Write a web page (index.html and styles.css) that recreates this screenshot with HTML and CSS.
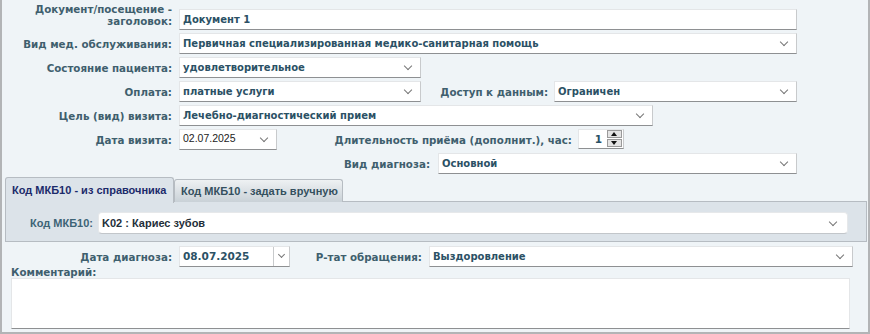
FILE: index.html
```html
<!DOCTYPE html>
<html lang="ru">
<head>
    <meta charset="UTF-8">
    <title>Посещение</title>
    <link rel="stylesheet" href="styles.css">
</head>
<body>
    <div class="form">
        <div class="row row-title">
            <div class="label">Документ/посещение -<br>заголовок:</div>
            <div class="field w-wide">Документ 1</div>
        </div>

        <div class="row">
            <div class="label">Вид мед. обслуживания:</div>
            <div class="field select w-wide">Первичная специализированная медико-санитарная помощь</div>
        </div>

        <div class="row">
            <div class="label">Состояние пациента:</div>
            <div class="field select w-mid">удовлетворительное</div>
        </div>

        <div class="row">
            <div class="label">Оплата:</div>
            <div class="field select w-mid">платные услуги</div>
            <div class="label label-access">Доступ к данным:</div>
            <div class="field select w-access">Ограничен</div>
        </div>

        <div class="row">
            <div class="label">Цель (вид) визита:</div>
            <div class="field select w-goal">Лечебно-диагностический прием</div>
        </div>

        <div class="row row-visit">
            <div class="label">Дата визита:</div>
            <div class="field select date w-date">02.07.2025</div>
            <div class="label label-duration">Длительность приёма (дополнит.), час:</div>
            <div class="spinner">
                <span class="spinner-value">1</span>
                <span class="spinner-buttons">
                    <span class="spin-btn up"></span>
                    <span class="spin-btn down"></span>
                </span>
            </div>
        </div>

        <div class="row">
            <div class="label label-diag">Вид диагноза:</div>
            <div class="field select w-diag">Основной</div>
        </div>

        <div class="tabs">
            <div class="tab active">Код МКБ10 - из справочника</div>
            <div class="tab">Код МКБ10 - задать вручную</div>
        </div>
        <div class="tab-panel">
            <div class="panel-label">Код МКБ10:</div>
            <div class="field select mkb">K02 : Кариес зубов</div>
        </div>

        <div class="row row-result">
            <div class="label">Дата диагноза:</div>
            <div class="field date-picker">
                <span class="date-value">08.07.2025</span>
                <span class="date-btn"></span>
            </div>
            <div class="label label-result">Р-тат обращения:</div>
            <div class="field select w-result">Выздоровление</div>
        </div>

        <div class="comment-label">Комментарий:</div>
        <div class="comment"></div>
    </div>
</body>
</html>
```

FILE: styles.css
```css
* {
    margin: 0;
    padding: 0;
    box-sizing: border-box;
}

body {
    font-family: 'DejaVu Sans', Verdana, sans-serif;
    background: #ffffff;
}

.form {
    width: 870px;
    height: 334px;
    background: #eff4f7;
    border: 2px solid #b2b4b6;
    border-top: none;
    padding-top: 9px;
}

.row {
    display: flex;
    align-items: center;
    height: 21px;
    margin-bottom: 3px;
}

.row-visit {
    margin-top: 1px;
}

.label {
    width: 170px;
    margin-right: 7px;
    text-align: right;
    font-size: 10.3px;
    font-weight: bold;
    color: #3f5f6e;
    line-height: 12px;
    white-space: nowrap;
}

.row-title .label {
    margin-bottom: 10px;
}

.field {
    position: relative;
    height: 21px;
    background: #fff;
    border: 1px solid #e4e6e8;
    border-bottom-color: #8e9092;
    border-right-color: #c8cacc;
    padding: 0 0 0 3px;
    font-size: 10px;
    font-weight: bold;
    color: #2b5165;
    line-height: 19px;
    white-space: nowrap;
}

.select::after {
    content: '';
    position: absolute;
    right: 9px;
    top: 5px;
    width: 5px;
    height: 5px;
    border-right: 1px solid #777;
    border-bottom: 1px solid #777;
    transform: rotate(45deg);
}

.w-wide { width: 618px; }
.w-mid { width: 242px; }
.w-access { width: 243px; }
.w-goal { width: 474px; }
.w-diag { width: 359px; }
.w-result { width: 424px; }

.label-access {
    width: 127px;
    margin-right: 6px;
}

.date {
    width: 98px;
    font-family: 'Liberation Sans', Arial, sans-serif;
    font-weight: normal;
    font-size: 10.5px;
    color: #222;
    line-height: 17px;
}

.label-duration {
    width: 295px;
    margin-right: 6px;
}

.spinner {
    display: flex;
    align-items: center;
    justify-content: flex-end;
    width: 46px;
    height: 20px;
    margin-top: -2px;
    background: #fff;
    border: 1px solid #e4e6e8;
    border-bottom-color: #8e9092;
    border-right-color: #c8cacc;
    padding-right: 1px;
}

.spinner-value {
    font-size: 10.5px;
    font-weight: bold;
    color: #2b5165;
    margin-right: 5px;
}

.spinner-buttons {
    display: flex;
    flex-direction: column;
    gap: 1px;
}

.spin-btn {
    position: relative;
    width: 15px;
    height: 8px;
    background: #e4e4e4;
    border: 1px solid #9a9a9a;
}

.spin-btn::after {
    content: '';
    position: absolute;
    left: 3px;
    border-left: 3.5px solid transparent;
    border-right: 3.5px solid transparent;
}

.spin-btn.up::after {
    top: 1px;
    border-bottom: 4px solid #111;
}

.spin-btn.down::after {
    top: 1px;
    border-top: 4px solid #111;
}

.label-diag {
    width: 428px;
    margin-right: 8px;
}

.tabs {
    display: flex;
    margin: 2px 0 0 3px;
    height: 25px;
    position: relative;
    z-index: 1;
}

.tab {
    width: 169px;
    height: 23px;
    margin-top: 2px;
    padding-left: 6px;
    font-family: 'Liberation Sans', Arial, sans-serif;
    font-size: 11px;
    font-weight: bold;
    line-height: 22px;
    color: #34505e;
    border: 1px solid #b6bcc2;
    border-bottom: none;
    border-radius: 3px 3px 0 0;
    background: linear-gradient(#eef1f3, #c9d1d7);
    white-space: nowrap;
}

.tab.active {
    margin-top: 0;
    height: 26px;
    line-height: 24px;
    color: #1c2b6b;
    background: #dce3e9;
}

.tab-panel {
    display: flex;
    align-items: center;
    margin: -1px 0 0 3px;
    width: 862px;
    height: 41px;
    background: #dce3e9;
    border: 1px solid #b6bcc2;
    padding-top: 2px;
}

.panel-label {
    width: 87px;
    text-align: right;
    margin-right: 5px;
    font-family: 'Liberation Sans', Arial, sans-serif;
    font-size: 11px;
    font-weight: bold;
    color: #3d6476;
}

.mkb {
    width: 750px;
    height: 22px;
    border-radius: 4px;
    border-color: #e6e8ea;
    border-bottom-color: #c2c6ca;
    font-family: 'Liberation Sans', Arial, sans-serif;
    font-size: 11px;
    color: #1f2f3a;
    line-height: 20px;
}

.mkb::after {
    top: 6px;
    right: 11px;
}

.row-result {
    margin-top: 4px;
    margin-bottom: 0;
}

.date-picker {
    display: flex;
    width: 111px;
    padding: 0;
}

.date-value {
    flex: 1;
    padding-left: 3px;
    font-size: 10.5px;
}

.date-btn {
    position: relative;
    width: 16px;
    border-left: 1px solid #c8cacc;
}

.date-btn::after {
    content: '';
    position: absolute;
    left: 5px;
    top: 5px;
    width: 4px;
    height: 4px;
    border-right: 1px solid #777;
    border-bottom: 1px solid #777;
    transform: rotate(45deg);
}

.label-result {
    width: 132px;
    margin-right: 7px;
}

.comment-label {
    margin: -1px 0 0 9px;
    font-size: 10.3px;
    font-weight: bold;
    color: #3f5f6e;
    line-height: 12px;
}

.comment {
    margin-left: 9px;
    width: 839px;
    height: 51px;
    background: #fff;
    border: 1px solid #e4e6e8;
    border-bottom-color: #8e9092;
}
```
